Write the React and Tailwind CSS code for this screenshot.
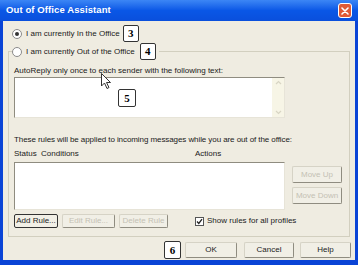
import React from "react";

const font = { fontFamily: '"Liberation Sans", Arial, sans-serif' };

function NumBox({ n, className = "" }) {
  return (
    <div
      className={`flex h-[17px] w-[16px] items-center justify-center rounded-[2px] border border-[#333] bg-white text-[11px] font-bold leading-none text-black ${className}`}
      style={{ fontFamily: '"Liberation Serif", "Times New Roman", serif' }}
    >
      {n}
    </div>
  );
}

function Radio({ checked }) {
  return (
    <div className="flex h-[10px] w-[10px] items-center justify-center rounded-full border border-[#8a8a8a] bg-white">
      {checked && <div className="h-[4px] w-[4px] rounded-full bg-[#333]" />}
    </div>
  );
}

function Btn({ children, disabled, def, className = "" }) {
  return (
    <div
      className={`flex items-center justify-center rounded-[2px] border bg-[#f1efe6] text-[8px] leading-none ${
        def ? "border-[#333]" : "border-[#d6d3c6] border-r-[#8f8c80] border-b-[#8f8c80]"
      } ${disabled ? "text-[#c4c1b4]" : "text-[#222]"} ${className}`}
    >
      {children}
    </div>
  );
}

export default function App() {
  return (
    <div className="flex h-[265px] w-[358px] flex-col bg-[#0a44d6]" style={font}>
      {/* Title bar */}
      <div className="flex h-[21px] shrink-0 items-center justify-between bg-gradient-to-b from-[#3c86f5] via-[#0a57e6] to-[#0a4fdc] pl-[6px] pr-[6px]">
        <span className="text-[9.5px] font-bold tracking-[0.1px] text-white">Out of Office Assistant</span>
        <div className="flex h-[15px] w-[14px] items-center justify-center rounded-[3px] border border-white bg-[#e05a35]">
          <svg width="8" height="8" viewBox="0 0 8 8">
            <path d="M1 1 L7 7 M7 1 L1 7" stroke="white" strokeWidth="1.6" strokeLinecap="round" />
          </svg>
        </div>
      </div>

      {/* Body */}
      <div className="mx-[3px] mb-[5px] flex flex-1 flex-col bg-[#efece1] pt-[4px] text-[8px] text-[#1a1a1a]">
        {/* Row 1 */}
        <div className="flex h-[17px] items-center pl-[9px]">
          <Radio checked />
          <span className="ml-[4px]">I am currently In the Office</span>
          <NumBox n="3" className="ml-[3px]" />
        </div>

        {/* Group */}
        <fieldset className="mx-[5px] mt-[1px] h-[194px] border border-[#d2cfbf] px-[5px]">
          <legend className="-ml-[2px] flex h-[17px] items-center pr-[3px]">
            <Radio />
            <span className="ml-[4px]">I am currently Out of the Office</span>
            <NumBox n="4" className="ml-[5px]" />
          </legend>

          <div className="mt-[5px] h-[11px] leading-[11px]">
            AutoReply only once to each sender with the following text:
          </div>

          <div className="relative mt-[1px] flex h-[41px] w-[271px] border border-[#8f8c80] border-r-[#e7e4d8] border-b-[#e7e4d8] bg-white">
            <div className="flex-1" />
            <div className="flex w-[12px] flex-col items-center justify-between bg-[#f7f5e6] py-[2px]">
              <svg width="7" height="5" viewBox="0 0 7 5">
                <path d="M1 4 L3.5 1.5 L6 4" stroke="#d8d5c4" strokeWidth="1.2" fill="none" />
              </svg>
              <svg width="7" height="5" viewBox="0 0 7 5">
                <path d="M1 1 L3.5 3.5 L6 1" stroke="#d8d5c4" strokeWidth="1.2" fill="none" />
              </svg>
            </div>
            <NumBox n="5" className="absolute left-[103px] top-[11px] h-[18px] w-[18px]" />
            <svg className="absolute left-[86px] -top-[5px]" width="11" height="17" viewBox="0 0 11 17">
              <path d="M0.5 0.5 L0.5 13 L3.5 10 L6 15.5 L8 14.5 L5.5 9.5 L9.5 9.5 Z" fill="white" stroke="#333" strokeWidth="1" />
            </svg>
          </div>

          <div className="mt-[16px] h-[11px] leading-[11px] tracking-[-0.08px]">
            These rules will be applied to incoming messages while you are out of the office:
          </div>
          <div className="mt-[3px] flex h-[11px] leading-[11px]">
            <span className="w-[27px]">Status</span>
            <span className="w-[154px]">Conditions</span>
            <span>Actions</span>
          </div>

          <div className="mt-[3px] flex">
            <div className="h-[48px] w-[271px] border border-[#8f8c80] border-r-[#e7e4d8] border-b-[#e7e4d8] bg-white" />
            <div className="ml-[7px] mt-[4px] flex flex-col gap-[4px]">
              <Btn disabled className="h-[17px] w-[50px]">Move Up</Btn>
              <Btn disabled className="h-[17px] w-[50px]">Move Down</Btn>
            </div>
          </div>

          <div className="mt-[4px] flex items-center">
            <Btn def className="h-[14px] w-[44px]">Add Rule...</Btn>
            <Btn disabled className="ml-[4px] h-[14px] w-[53px]">Edit Rule...</Btn>
            <Btn disabled className="ml-[4px] h-[14px] w-[49px]">Delete Rule</Btn>
            <div className="ml-[27px] flex h-[9px] w-[9px] items-center justify-center border border-[#555] bg-white">
              <svg width="7" height="7" viewBox="0 0 7 7">
                <path d="M1 3.5 L2.8 5.5 L6 1.2" stroke="#222" strokeWidth="1.3" fill="none" />
              </svg>
            </div>
            <span className="ml-[3px]">Show rules for all profiles</span>
          </div>
        </fieldset>

        {/* Bottom row */}
        <div className="mt-[4px] flex items-center justify-end pr-[4px]">
          <NumBox n="6" className="h-[18px] w-[17px]" />
          <Btn className="ml-[4px] h-[16px] w-[52px]">OK</Btn>
          <Btn className="ml-[7px] h-[16px] w-[50px]">Cancel</Btn>
          <Btn className="ml-[6px] h-[16px] w-[51px]">Help</Btn>
        </div>
      </div>
    </div>
  );
}
